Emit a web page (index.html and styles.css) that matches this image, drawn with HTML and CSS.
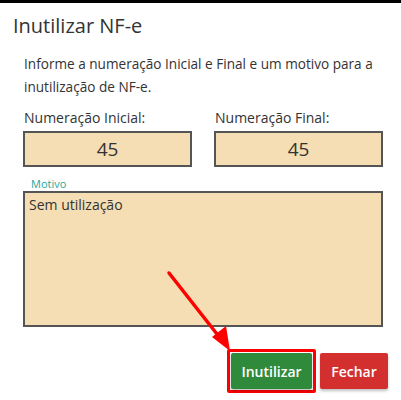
FILE: index.html
```html
<!DOCTYPE html>
<html>
<head>
<meta charset="utf-8">
<link rel="stylesheet" href="styles.css">
</head>
<body>
<div class="modal">
  <h4 class="title">Inutilizar NF-e</h4>
  <div class="content">
    <p class="intro">Informe a numeração Inicial e Final e um motivo para a inutilização de NF-e.</p>
    <div class="row">
      <div class="field">
        <label class="lbl">Numeração Inicial:</label>
        <div class="num">45</div>
      </div>
      <div class="field">
        <label class="lbl">Numeração Final:</label>
        <div class="num">45</div>
      </div>
    </div>
    <div class="motivo-lbl">Motivo</div>
    <div class="motivo">Sem utilização</div>
    <div class="actions">
      <span class="hl"><button class="btn green">Inutilizar</button></span>
      <button class="btn red">Fechar</button>
    </div>
  </div>
  <svg class="arrow" width="401" height="400" viewBox="0 0 401 400">
    <line x1="169" y1="273" x2="224" y2="343" stroke="#f00" stroke-width="3.5" stroke-linecap="round"/>
    <polygon points="230,351 212,337 226,326" fill="#f00"/>
  </svg>
</div>
</body>
</html>
```
FILE: styles.css
```css
* { box-sizing: border-box; }
html, body { margin: 0; padding: 0; background: #fff; }
body { font-family: "Open Sans", "Noto Sans", sans-serif; color: #333; width: 401px; height: 400px; overflow: hidden; }
.modal { position: relative; border-top: 3px solid #000; height: 400px; }
.title { margin: 0; padding: 10px 0 0 13px; font-size: 20px; font-weight: 400; line-height: 26px; color: #333; }
.content { padding: 0 13px 0 23px; }
.intro { margin: 13px 0 0 1px; font-size: 13.6px; line-height: 23px; color: #333; width: 360px; }
.row { display: flex; gap: 22px; margin-top: 12px; }
.field { width: 169px; display: flex; flex-direction: column; }
.lbl { font-size: 14px; line-height: 16px; padding-left: 1px; margin-bottom: 5px; color: #333; }
.num { height: 36px; background: #f5deb3; border: 2px solid #555; font-size: 19px; display: flex; align-items: center; justify-content: center; color: #333; }
.motivo-lbl { margin: 10px 0 0 8px; font-size: 11px; line-height: 14px; color: #26a69a; }
.motivo { margin-top: 0; height: 136px; width: 360px; background: #f5deb3; border: 2px solid #555; padding: 3px 4px; font-size: 14px; line-height: 18px; color: #333; }
.actions { display: flex; justify-content: flex-end; align-items: center; gap: 4px; margin-top: 22px; }
.hl { display: inline-flex; border: 3px solid #f00; border-radius: 2px; padding: 1px; }
.btn { border: none; font-family: inherit; font-size: 14px; font-weight: 600; color: #fff; height: 36px; padding: 0; border-radius: 2px; box-shadow: 0 2px 3px rgba(0,0,0,0.25); }
.green { background: #2f8a3c; width: 81px; }
.red { background: #d32f2f; width: 68px; }
.arrow { position: absolute; left: 0; top: -3px; pointer-events: none; }
```
